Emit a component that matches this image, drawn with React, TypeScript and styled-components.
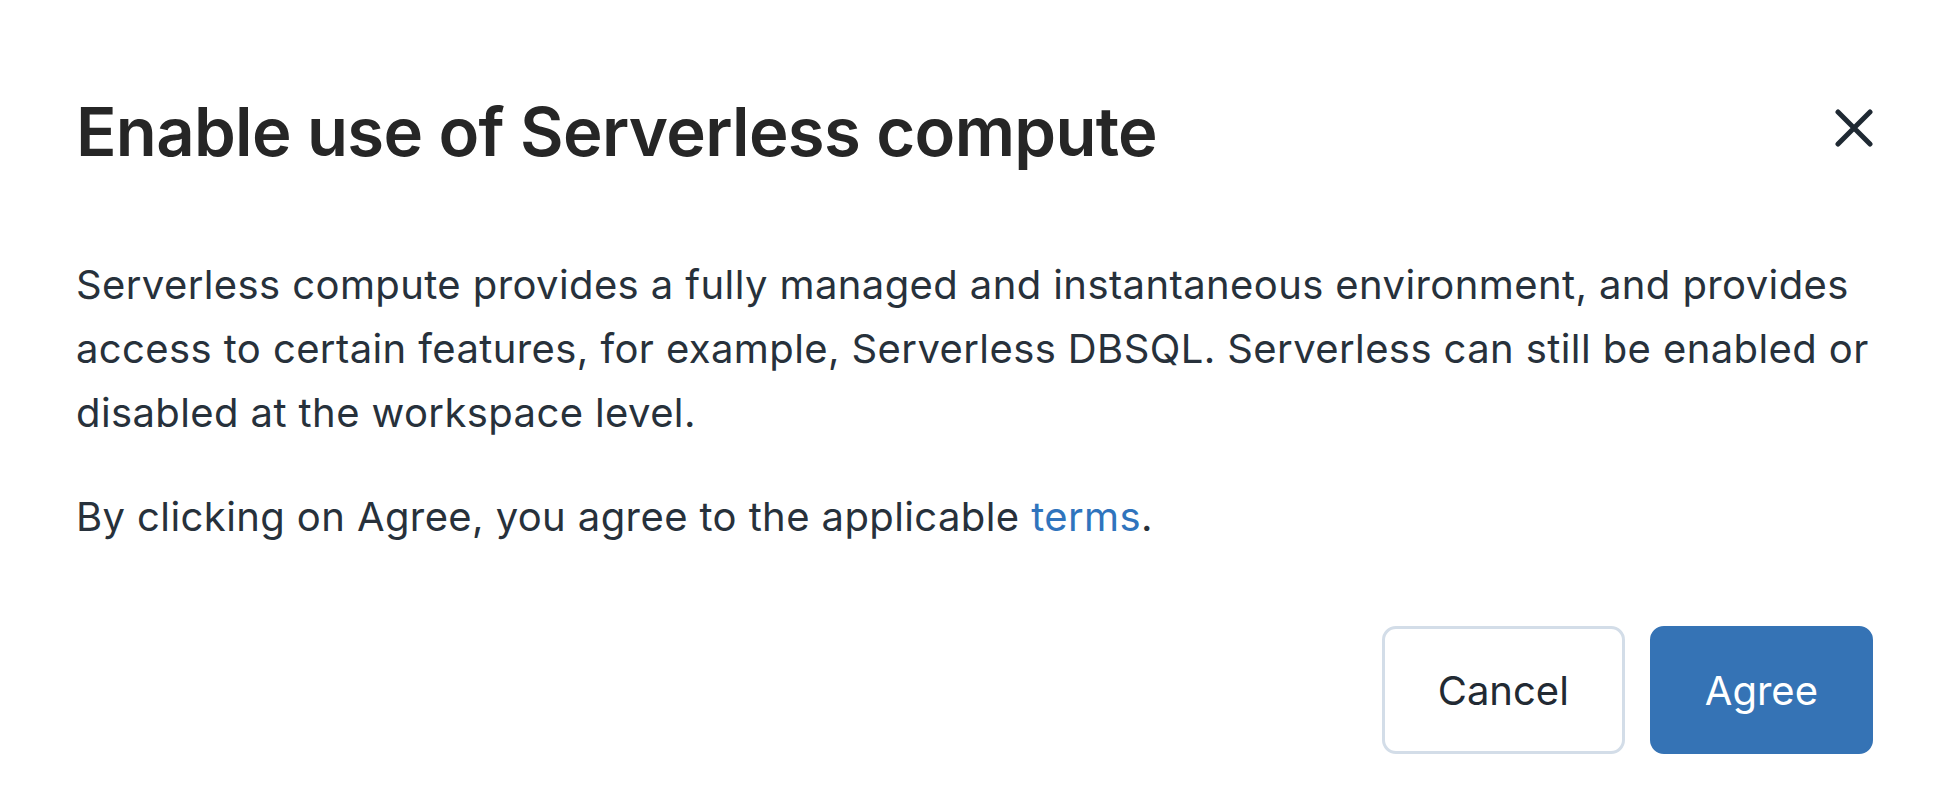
import styled, { createGlobalStyle } from 'styled-components'

const GlobalStyle = createGlobalStyle`
    html, body {
        margin: 0;
        padding: 0;
        background: #ffffff;
    }
    body {
        font-family: Inter, "Noto Sans", sans-serif;
        -webkit-font-smoothing: antialiased;
    }
`

const Dialog = styled.div`
    width: 1950px;
    height: 812px;
    box-sizing: border-box;
    padding: 92px 77px 0 76px;
    background: #ffffff;
    display: flex;
    flex-direction: column;
`

const Header = styled.header`
    display: flex;
    justify-content: space-between;
    align-items: center;
`

const Title = styled.h1`
    margin: 0;
    font-size: 67px;
    line-height: 80px;
    font-weight: 600;
    color: #262626;
    letter-spacing: -0.7px;
`

const CloseButton = styled.button`
    width: 38px;
    height: 38px;
    padding: 0;
    border: none;
    background: transparent;
    display: flex;
    align-items: center;
    justify-content: center;
    cursor: pointer;
    margin-top: -8px;
`

const Body = styled.div`
    margin-top: 81px;
    margin-right: -8px;
`

const Paragraph = styled.p`
    margin: 0 0 40px;
    font-size: 40px;
    line-height: 64px;
    letter-spacing: 0.4px;
    color: #27313b;
    &:last-child {
        margin-bottom: 0;
    }
`

const Link = styled.a`
    color: #2f74bd;
    text-decoration: none;
`

const Footer = styled.footer`
    margin-top: 77px;
    display: flex;
    justify-content: flex-end;
    gap: 25px;
`

const Button = styled.button<{ $primary?: boolean }>`
    height: 128px;
    padding: 0 ${p => (p.$primary ? 52 : 53)}px;
    box-sizing: border-box;
    font-family: Inter, "Noto Sans", sans-serif;
    font-size: 40px;
    border-radius: 14px;
    cursor: pointer;
    border: 3px solid ${p => (p.$primary ? '#3573b5' : '#d3dde8')};
    background: ${p => (p.$primary ? '#3573b5' : '#ffffff')};
    color: ${p => (p.$primary ? '#ffffff' : '#222a33')};
`

const CloseIcon = () => (
    <svg width="38" height="38" viewBox="0 0 38 38">
        <path d="M3 3L35 35M35 3L3 35" stroke="#1f2933" strokeWidth="5" strokeLinecap="round" />
    </svg>
)

export default function App() {
    return (
        <>
            <GlobalStyle />
            <Dialog>
                <Header>
                    <Title>Enable use of Serverless compute</Title>
                    <CloseButton aria-label="Close">
                        <CloseIcon />
                    </CloseButton>
                </Header>
                <Body>
                    <Paragraph>
                        Serverless compute provides a fully managed and instantaneous environment, and provides
                        access to certain features, for example, Serverless DBSQL. Serverless can still be enabled or
                        disabled at the workspace level.
                    </Paragraph>
                    <Paragraph>
                        By clicking on Agree, you agree to the applicable <Link href="#">terms</Link>.
                    </Paragraph>
                </Body>
                <Footer>
                    <Button>Cancel</Button>
                    <Button $primary>Agree</Button>
                </Footer>
            </Dialog>
        </>
    )
}
